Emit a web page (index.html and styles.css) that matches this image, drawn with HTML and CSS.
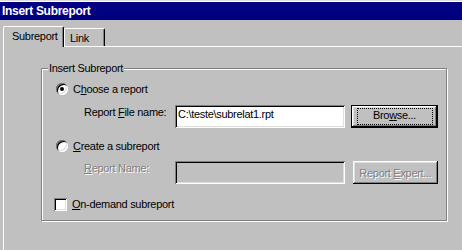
FILE: index.html
```html
<!DOCTYPE html>
<html lang="en">
<head>
  <meta charset="UTF-8">
  <title>Insert Subreport</title>
  <link rel="stylesheet" href="styles.css">
</head>
<body>
  <div class="window">
    <!-- Title bar -->
    <div class="titlebar">Insert Subreport</div>

    <!-- Tabs -->
    <div class="tabs">
      <div class="tab active">Subreport</div>
      <div class="tab">Link</div>
    </div>

    <!-- Tab page -->
    <div class="panel">
      <fieldset class="group">
        <legend>Insert Subreport</legend>

        <div class="option">
          <span class="radio checked"></span>
          <span>C<u>h</u>oose a report</span>
        </div>
        <div class="field-row">
          <span class="field-label">Report <u>F</u>ile name:</span>
          <div class="textbox">C:\teste\subrelat1.rpt</div>
          <button class="btn default"><span class="focus">Bro<u>w</u>se...</span></button>
        </div>

        <div class="option second">
          <span class="radio"></span>
          <span><u>C</u>reate a subreport</span>
        </div>
        <div class="field-row disabled">
          <span class="field-label"><u>R</u>eport Name:</span>
          <div class="textbox"></div>
          <button class="btn"><span>Report <u>E</u>xpert...</span></button>
        </div>

        <div class="option check-row">
          <span class="checkbox"></span>
          <span><u>O</u>n-demand subreport</span>
        </div>
      </fieldset>
    </div>
  </div>
</body>
</html>
```

FILE: styles.css
```css
* {
  margin: 0;
  padding: 0;
  box-sizing: border-box;
}
body {
  font-family: 'Liberation Sans', Arial, sans-serif;
  font-size: 11px;
  line-height: 14px;
  letter-spacing: -0.3px;
  color: #000;
  background: #c0c0c0;
  width: 462px;
  height: 250px;
  overflow: hidden;
}

.window {
  border-top: 1px solid #dfdfdf;
  padding-top: 1px;
  box-shadow: inset 0 1px 0 #fff;
}

/* Title bar */
.titlebar {
  height: 18px;
  line-height: 18px;
  background: #000080;
  color: #fff;
  font-size: 12px;
  font-weight: bold;
  padding-left: 2px;
}

/* Tabs */
.tabs {
  display: flex;
  align-items: flex-end;
  height: 20px;
  margin-top: 6px;
  padding-left: 3px;
}
.tab {
  height: 18px;
  width: 41px;
  padding: 2px 0 0 5px;
  border-top: 1px solid #fff;
  border-left: 1px solid #fff;
  border-right: 1px solid #000;
  border-radius: 2px 2px 0 0;
  box-shadow: inset -1px 0 0 #808080;
  background: #c0c0c0;
}
.tab.active {
  position: relative;
  z-index: 1;
  height: 21px;
  width: 61px;
  margin-bottom: -1px;
  padding-left: 8px;
}

/* Tab page */
.panel {
  margin-left: 3px;
  height: 210px;
  border-top: 1px solid #fff;
  border-left: 1px solid #fff;
  padding-top: 15px;
}

/* Group box */
.group {
  width: 406px;
  margin-left: 37px;
  border: 1px solid #808080;
  box-shadow: 1px 1px 0 #fff, inset 1px 1px 0 #fff;
  padding: 7px 0 9px 14px;
}
.group legend {
  margin-left: -8px;
  padding: 0 1px;
  line-height: 13px;
  background: #c0c0c0;
}

.option {
  display: flex;
  align-items: center;
  gap: 5px;
  height: 14px;
}
.option.second {
  margin-top: 11px;
}
.option.check-row {
  margin-top: 13px;
  gap: 5px;
  margin-left: -2px;
}

.radio {
  position: relative;
  width: 12px;
  height: 12px;
  border-radius: 50%;
  background: #fff;
  box-shadow: inset 1px 1px 0 #808080, inset -1px -1px 0 #fff,
              inset 2px 2px 0 #000, inset -2px -2px 0 #dfdfdf;
}
.radio.checked::after {
  content: "";
  position: absolute;
  left: 4px;
  top: 4px;
  width: 4px;
  height: 4px;
  border-radius: 50%;
  background: #000;
}

.checkbox {
  width: 13px;
  height: 13px;
  background: #fff;
  box-shadow: inset 1px 1px 0 #808080, inset -1px -1px 0 #fff,
              inset 2px 2px 0 #000, inset -2px -2px 0 #dfdfdf;
}

/* Rows with a text box and a button */
.field-row {
  display: flex;
  align-items: flex-start;
  margin-top: 9px;
  padding-left: 28px;
  height: 23px;
}
.disabled.field-row {
  margin-top: 8px;
}
.field-label {
  width: 91px;
}
.textbox {
  width: 170px;
  height: 23px;
  padding: 2px 3px 0;
  background: #fff;
  box-shadow: inset 1px 1px 0 #808080, inset -1px -1px 0 #fff,
              inset 2px 2px 0 #000, inset -2px -2px 0 #dfdfdf;
}
.disabled .textbox {
  background: #c0c0c0;
}
.disabled .field-label,
.disabled .btn {
  color: #808080;
  text-shadow: 1px 1px 0 #fff;
}

.btn {
  font: inherit;
  letter-spacing: inherit;
  color: #000;
  width: 85px;
  height: 23px;
  margin-left: 8px;
  border: none;
  background: #c0c0c0;
  box-shadow: inset -1px -1px 0 #000, inset 1px 1px 0 #fff,
              inset -2px -2px 0 #808080, inset 2px 2px 0 #dfdfdf;
  display: flex;
  align-items: center;
  justify-content: center;
}
.btn.default {
  width: 87px;
  margin-left: 6px;
  border: 1px solid #000;
}
.btn .focus {
  width: 76px;
  height: 17px;
  line-height: 15px;
  outline: 1px dotted #000;
  outline-offset: -1px;
  text-align: center;
}
```
